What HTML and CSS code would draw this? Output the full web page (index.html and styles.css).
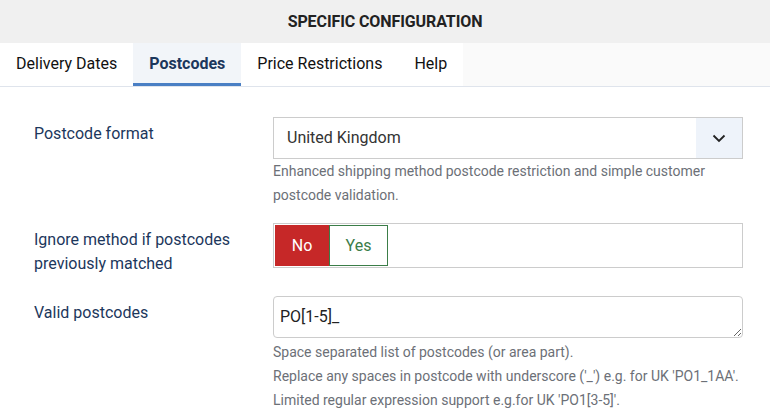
FILE: index.html
```html
<!DOCTYPE html>
<html lang="en">
<head>
    <meta charset="UTF-8">
    <title>Specific Configuration</title>
    <link rel="stylesheet" href="styles.css">
</head>
<body>
    <div class="panel-title">SPECIFIC CONFIGURATION</div>

    <div class="tabs">
        <div class="tab-list">
            <div class="tab">Delivery Dates</div>
            <div class="tab active">Postcodes</div>
            <div class="tab">Price Restrictions</div>
            <div class="tab">Help</div>
        </div>
    </div>

    <div class="form">
        <!-- Postcode format -->
        <div class="form-row">
            <label class="form-label">Postcode format</label>
            <div class="form-control">
                <div class="select">
                    <span class="select-value">United Kingdom</span>
                    <span class="select-button">
                        <svg width="14" height="9" viewBox="0 0 14 9"><path d="M1.5 1.5 L7 7 L12.5 1.5" fill="none" stroke="#222" stroke-width="1.8"/></svg>
                    </span>
                </div>
                <div class="help">Enhanced shipping method postcode restriction and simple customer postcode validation.</div>
            </div>
        </div>

        <!-- Ignore method switch -->
        <div class="form-row">
            <label class="form-label">Ignore method if postcodes previously matched</label>
            <div class="form-control">
                <div class="switch">
                    <span class="switch-btn no">No</span>
                    <span class="switch-btn yes">Yes</span>
                </div>
            </div>
        </div>

        <!-- Valid postcodes -->
        <div class="form-row">
            <label class="form-label">Valid postcodes</label>
            <div class="form-control">
                <textarea class="textarea" rows="1">PO[1-5]_</textarea>
                <div class="help spaced">
                    Space separated list of postcodes (or area part).<br>
                    Replace any spaces in postcode with underscore ('_') e.g. for UK 'PO1_1AA'.<br>
                    Limited regular expression support e.g.for UK 'PO1[3-5]'.
                </div>
            </div>
        </div>
    </div>
</body>
</html>
```

FILE: styles.css
```css
body {
    margin: 0;
    font-family: Roboto, "Liberation Sans", sans-serif;
    background: #fff;
    color: #222;
    overflow: hidden;
}

.panel-title {
    height: 43px;
    line-height: 43px;
    background-color: #f0f0f0;
    text-align: center;
    font-size: 16px;
    font-weight: bold;
    color: #222;
    letter-spacing: -0.1px;
}

.tabs {
    background-color: #fafafa;
    border-bottom: 1px solid #dfe4ec;
}

.tab-list {
    display: flex;
    width: max-content;
    background-color: #fff;
}

.tab {
    padding: 0 16px;
    height: 40px;
    line-height: 42px;
    font-size: 16px;
    color: #111;
    white-space: nowrap;
    border-bottom: 3px solid transparent;
}

.tab.active {
    background-color: #f2f5f9;
    color: #1c375c;
    font-weight: bold;
    border-bottom-color: #4a7fc4;
}

.form {
    padding: 30px 27px 0 34px;
}

.form-row {
    display: grid;
    grid-template-columns: 239px 470px;
    margin-bottom: 16px;
}

.form-row:nth-child(2) {
    margin-bottom: 20px;
}

.form-label {
    padding-top: 5px;
    font-size: 16px;
    line-height: 24px;
    color: #1c375c;
}

.select {
    display: flex;
    height: 40px;
    border: 1px solid #ccc;
    align-items: stretch;
}

.select-value {
    flex: 1;
    padding-left: 13px;
    line-height: 40px;
    font-size: 16px;
    color: #333;
}

.select-button {
    width: 46px;
    background-color: #eef3fa;
    display: flex;
    align-items: center;
    justify-content: center;
}

.help {
    font-size: 14px;
    line-height: 24px;
    color: #6c7077;
}

.help.spaced {
    margin-top: 2px;
}

.switch {
    display: flex;
    height: 41px;
    padding: 1px;
    border: 1px solid #ccc;
}

.switch-btn {
    display: flex;
    align-items: center;
    justify-content: center;
    font-size: 16px;
}

.switch-btn.no {
    width: 54px;
    background-color: #c62828;
    color: #fff;
}

.switch-btn.yes {
    width: 57px;
    border: 1px solid #3b7d48;
    color: #3b7d48;
}

.textarea {
    display: block;
    box-sizing: border-box;
    width: 470px;
    height: 42px;
    padding: 10px 6px 6px;
    border: 1px solid #ccc;
    border-radius: 4px;
    font-family: Roboto, "Liberation Sans", sans-serif;
    font-size: 16px;
    line-height: 20px;
    color: #222;
    resize: vertical;
}
```
